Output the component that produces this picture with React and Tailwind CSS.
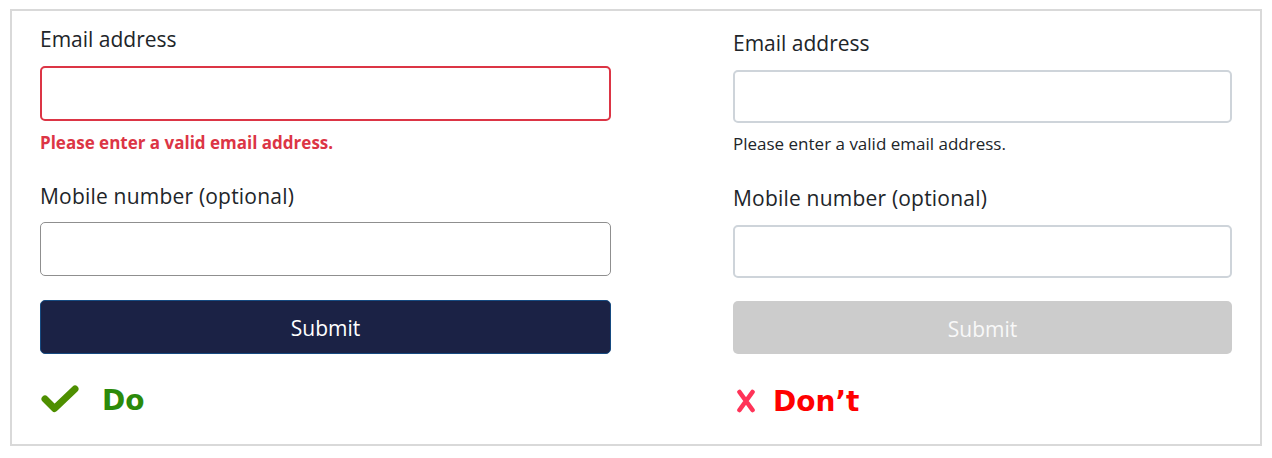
import React from "react";

const sans = { fontFamily: '"Open Sans", "Noto Sans", Arial, sans-serif' };
const geo = { fontFamily: '"DejaVu Sans", "Open Sans", sans-serif' };

function Check() {
  return (
    <svg width="40" height="30" viewBox="0 0 40 30" className="shrink-0">
      <path d="M5 15 L14.5 24.5 L35 5" fill="none" stroke="#4e8f00" strokeWidth="7" strokeLinecap="round" strokeLinejoin="round" />
    </svg>
  );
}

function Cross() {
  return (
    <svg width="22" height="24" viewBox="0 0 22 24" className="shrink-0">
      <path d="M4.5 3 L17.5 21 M17.5 3 L4.5 21" fill="none" stroke="#ff3358" strokeWidth="4.6" strokeLinecap="round" />
    </svg>
  );
}

export default function App() {
  return (
    <div className="w-[1272px] h-[458px] bg-white pt-[9px] pl-[10px]" style={sans}>
      <div className="w-[1252px] h-[437px] border-2 border-[#d9d9d9] flex px-[28px] gap-[122px] text-[#212529]">
        {/* Left: Do */}
        <div className="w-[571px] flex flex-col pt-[14px]">
          <label className="text-[21px] leading-[28px]">Email address</label>
          <div className="mt-[13px] h-[55px] rounded-[5px] border-2 border-[#dc3545] bg-white" />
          <div className="mt-[10px] text-[17px] leading-[24px] font-bold text-[#dc3545]">Please enter a valid email address.</div>
          <label className="mt-[27px] text-[21px] leading-[28px] tracking-[0.2px]">Mobile number (optional)</label>
          <div className="mt-[12px] h-[54px] rounded-[5px] border-[1.5px] border-[#8f8f8f] bg-white" />
          <button className="mt-[24px] h-[54px] rounded-[5px] border border-[#164a80] bg-[#1b2245] text-white text-[21px] leading-[28px] pt-[2px]">Submit</button>
          <div className="mt-[30px] flex items-center h-[30px]">
            <Check />
            <span className="ml-[22px] mt-[3px] text-[28px] leading-[30px] font-bold text-[#2b8a0a]" style={geo}>Do</span>
          </div>
        </div>
        {/* Right: Don't */}
        <div className="w-[499px] flex flex-col pt-[18px]">
          <label className="text-[21px] leading-[28px]">Email address</label>
          <div className="mt-[13px] h-[53px] rounded-[5px] border-2 border-[#ced4da] bg-white" />
          <div className="mt-[9px] text-[17px] leading-[24px]">Please enter a valid email address.</div>
          <label className="mt-[28px] text-[21px] leading-[28px] tracking-[0.2px]">Mobile number (optional)</label>
          <div className="mt-[13px] h-[53px] rounded-[5px] border-2 border-[#ced4da] bg-white" />
          <button className="mt-[23px] h-[53px] rounded-[5px] bg-[#cccccc] text-[#f8f8f8] text-[21px] leading-[28px] pt-[2px]">Submit</button>
          <div className="mt-[32px] flex items-center h-[30px]">
            <span className="ml-[2px]"><Cross /></span>
            <span className="ml-[16px] mt-[1px] text-[28px] leading-[30px] font-bold text-[#ff0000]" style={geo}>Don’t</span>
          </div>
        </div>
      </div>
    </div>
  );
}
